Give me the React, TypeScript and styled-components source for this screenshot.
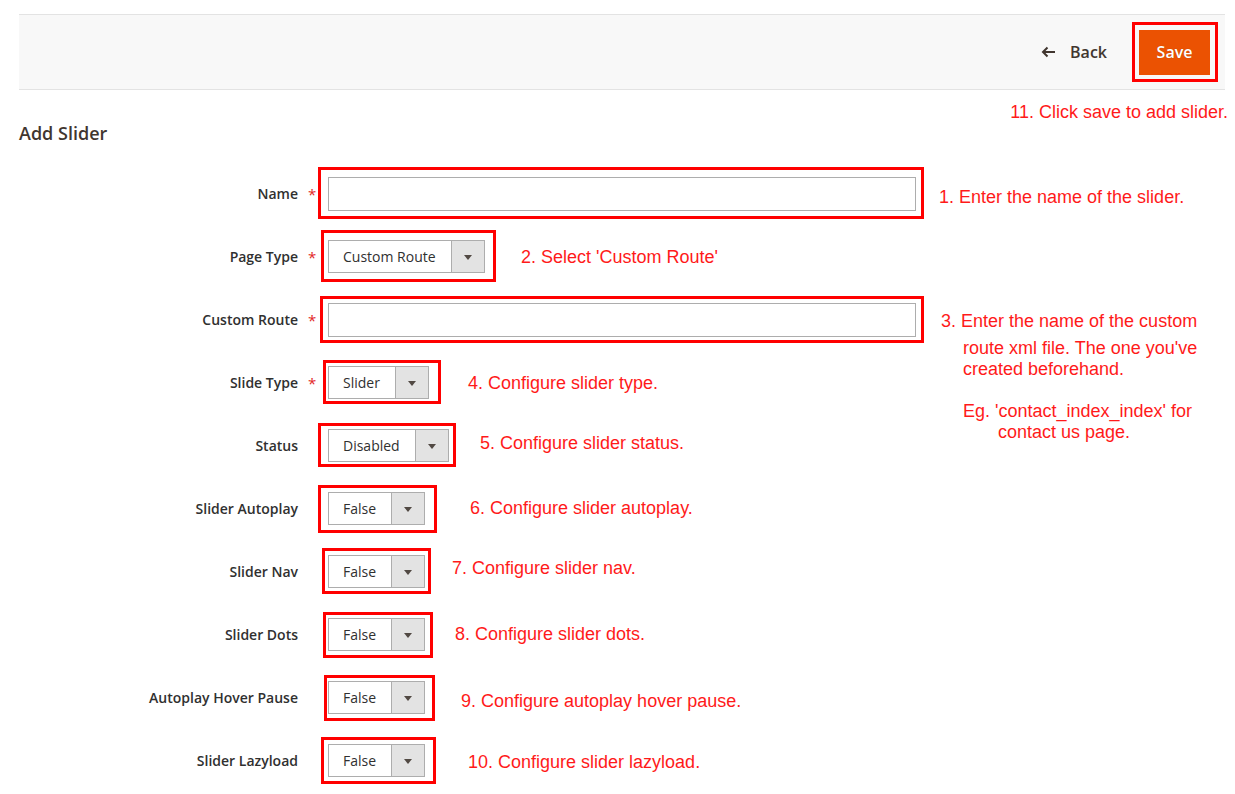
import React from "react";
import styled, { createGlobalStyle } from "styled-components";

type Box = { l: number; r: number; t: number; b: number };

type Row = {
  label: string;
  required?: boolean;
  value?: string;
  width?: number;
  box: Box;
  gap: number;
  dy?: number;
  note: { text: string; indent?: number; space?: number }[];
};

const rows: Row[] = [
  {
    label: "Name",
    required: true,
    box: { l: 10, r: 8, t: 10, b: 8 },
    gap: 23,
    dy: 3,
    note: [{ text: "1. Enter the name of the slider." }],
  },
  {
    label: "Page Type",
    required: true,
    value: "Custom Route",
    width: 157,
    box: { l: 7, r: 11, t: 10, b: 9 },
    gap: 36,
    note: [{ text: "2. Select 'Custom Route'" }],
  },
  {
    label: "Custom Route",
    required: true,
    box: { l: 8, r: 8, t: 7, b: 6 },
    gap: 25,
    note: [
      { text: "3. Enter the name of the custom" },
      { text: "route xml file. The one you've", indent: 22, space: 6 },
      { text: "created beforehand.", indent: 22 },
      { text: "Eg. 'contact_index_index' for", indent: 22, space: 21 },
      { text: "contact us page.", indent: 57 },
    ],
  },
  {
    label: "Slide Type",
    required: true,
    value: "Slider",
    width: 101,
    box: { l: 5, r: 12, t: 6, b: 5 },
    gap: 39,
    note: [{ text: "4. Configure slider type." }],
  },
  {
    label: "Status",
    value: "Disabled",
    width: 121,
    box: { l: 10, r: 7, t: 6, b: 5 },
    gap: 31,
    dy: -3,
    note: [{ text: "5. Configure slider status." }],
  },
  {
    label: "Slider Autoplay",
    value: "False",
    width: 97,
    box: { l: 10, r: 12, t: 7, b: 8 },
    gap: 45,
    dy: -1,
    note: [{ text: "6. Configure slider autoplay." }],
  },
  {
    label: "Slider Nav",
    value: "False",
    width: 97,
    box: { l: 6, r: 6, t: 7, b: 6 },
    gap: 27,
    dy: -4,
    note: [{ text: "7. Configure slider nav." }],
  },
  {
    label: "Slider Dots",
    value: "False",
    width: 97,
    box: { l: 5, r: 8, t: 6, b: 7 },
    gap: 30,
    dy: -1,
    note: [{ text: "8. Configure slider dots." }],
  },
  {
    label: "Autoplay Hover Pause",
    value: "False",
    width: 97,
    box: { l: 4, r: 10, t: 6, b: 7 },
    gap: 36,
    dy: 3,
    note: [{ text: "9. Configure autoplay hover pause." }],
  },
  {
    label: "Slider Lazyload",
    value: "False",
    width: 97,
    box: { l: 7, r: 11, t: 7, b: 7 },
    gap: 43,
    dy: 1,
    note: [{ text: "10. Configure slider lazyload." }],
  },
];

const GlobalStyle = createGlobalStyle`
  body {
    margin: 0;
    background: #fff;
    font-family: "Open Sans", "Liberation Sans", sans-serif;
    color: #303030;
  }
`;

const Page = styled.div`
  padding: 14px 10px 0 19px;
`;

const TopBar = styled.div`
  position: relative;
  height: 74px;
  display: flex;
  align-items: center;
  justify-content: flex-end;
  padding-right: 15px;
  background: #f8f8f8;
  border-top: 1px solid #e3e3e3;
  border-bottom: 1px solid #e3e3e3;
`;

const BackLink = styled.a`
  display: flex;
  align-items: center;
  gap: 14px;
  margin-right: 32px;
  color: #41362f;
  font-size: 16px;
  font-weight: 600;
  text-decoration: none;
`;

const SaveButton = styled.button`
  width: 71px;
  height: 45px;
  padding: 0;
  background: #eb5202;
  border: 1px solid #eb5202;
  color: #fff;
  font-family: "Open Sans", sans-serif;
  font-size: 16px;
  font-weight: 600;
  text-shadow: 0 0 1px rgba(0, 0, 0, 0.25);
`;

const Marked = styled.div`
  position: relative;
  display: flex;
  flex: none;
`;

const Annot = styled.span<{ $box: Box }>`
  position: absolute;
  left: ${(p) => -p.$box.l}px;
  right: ${(p) => -p.$box.r}px;
  top: ${(p) => -p.$box.t}px;
  bottom: ${(p) => -p.$box.b}px;
  border: 3px solid #ff0000;
  pointer-events: none;
`;

const SaveNote = styled.div`
  position: absolute;
  top: calc(100% + 13px);
  right: -3px;
  font-family: "Liberation Sans", Arial, sans-serif;
  font-size: 18px;
  line-height: 21px;
  color: #ff1a1a;
  white-space: nowrap;
`;

const Title = styled.h2`
  margin: 33px 0 0;
  font-size: 18px;
  line-height: 21px;
  font-weight: 600;
  color: #41362f;
`;

const Form = styled.div`
  margin-top: 18px;
`;

const FieldRow = styled.div`
  height: 63px;
  display: flex;
  align-items: center;
  margin-left: -19px;
`;

const Label = styled.label`
  width: 298px;
  flex: none;
  text-align: right;
  font-size: 14px;
  font-weight: 600;
  color: #303030;
`;

const Star = styled.span`
  width: 20px;
  flex: none;
  padding-left: 10px;
  color: #e22626;
  font-size: 15px;
`;

const TextInput = styled.div`
  width: 586px;
  height: 32px;
  border: 1px solid #adadad;
  background: #fff;
`;

const Select = styled.div<{ $w: number }>`
  width: ${(p) => p.$w - 2}px;
  height: 31px;
  display: flex;
  border: 1px solid #adadad;
  background: #fff;
`;

const SelectValue = styled.span`
  flex: 1;
  display: flex;
  align-items: center;
  padding-left: 14px;
  font-size: 14px;
  color: #303030;
`;

const SelectArrow = styled.span`
  width: 32px;
  display: flex;
  align-items: center;
  justify-content: center;
  background: #e3e3e3;
  border-left: 1px solid #adadad;
  &::after {
    content: "";
    border-left: 4px solid transparent;
    border-right: 4px solid transparent;
    border-top: 5px solid #514943;
    margin-top: 1px;
  }
`;

const Note = styled.div<{ $gap: number; $dy: number; $multi: boolean }>`
  margin-left: ${(p) => p.$gap}px;
  align-self: ${(p) => (p.$multi ? "flex-start" : "center")};
  margin-top: ${(p) => (p.$multi ? 22 : 0)}px;
  transform: translateY(${(p) => p.$dy}px);
  font-family: "Liberation Sans", Arial, sans-serif;
  font-size: 18px;
  line-height: 21px;
  color: #ff1a1a;
  white-space: nowrap;
`;

const NoteLine = styled.div<{ $indent: number; $space: number }>`
  padding-left: ${(p) => p.$indent}px;
  margin-top: ${(p) => p.$space}px;
`;

const BackArrow = () => (
  <svg width="15" height="12" viewBox="0 0 15 12" fill="none">
    <path
      d="M14 6H2M6.5 1.5L2 6l4.5 4.5"
      stroke="#41362f"
      strokeWidth="2"
    />
  </svg>
);

export default function App() {
  return (
    <Page>
      <GlobalStyle />
      <TopBar>
        <BackLink>
          <BackArrow />
          Back
        </BackLink>
        <Marked>
          <SaveButton>Save</SaveButton>
          <Annot $box={{ l: 7, r: 8, t: 8, b: 7 }} />
        </Marked>
        <SaveNote>11. Click save to add slider.</SaveNote>
      </TopBar>
      <Title>Add Slider</Title>
      <Form>
        {rows.map((row) => (
          <FieldRow key={row.label}>
            <Label>{row.label}</Label>
            <Star>{row.required ? "*" : ""}</Star>
            <Marked>
              {row.value ? (
                <Select $w={row.width ?? 97}>
                  <SelectValue>{row.value}</SelectValue>
                  <SelectArrow />
                </Select>
              ) : (
                <TextInput />
              )}
              <Annot $box={row.box} />
            </Marked>
            <Note
              $gap={row.gap}
              $dy={(row.dy ?? 0) + 1}
              $multi={row.note.length > 1}
            >
              {row.note.map((line) => (
                <NoteLine
                  key={line.text}
                  $indent={line.indent ?? 0}
                  $space={line.space ?? 0}
                >
                  {line.text}
                </NoteLine>
              ))}
            </Note>
          </FieldRow>
        ))}
      </Form>
    </Page>
  );
}
